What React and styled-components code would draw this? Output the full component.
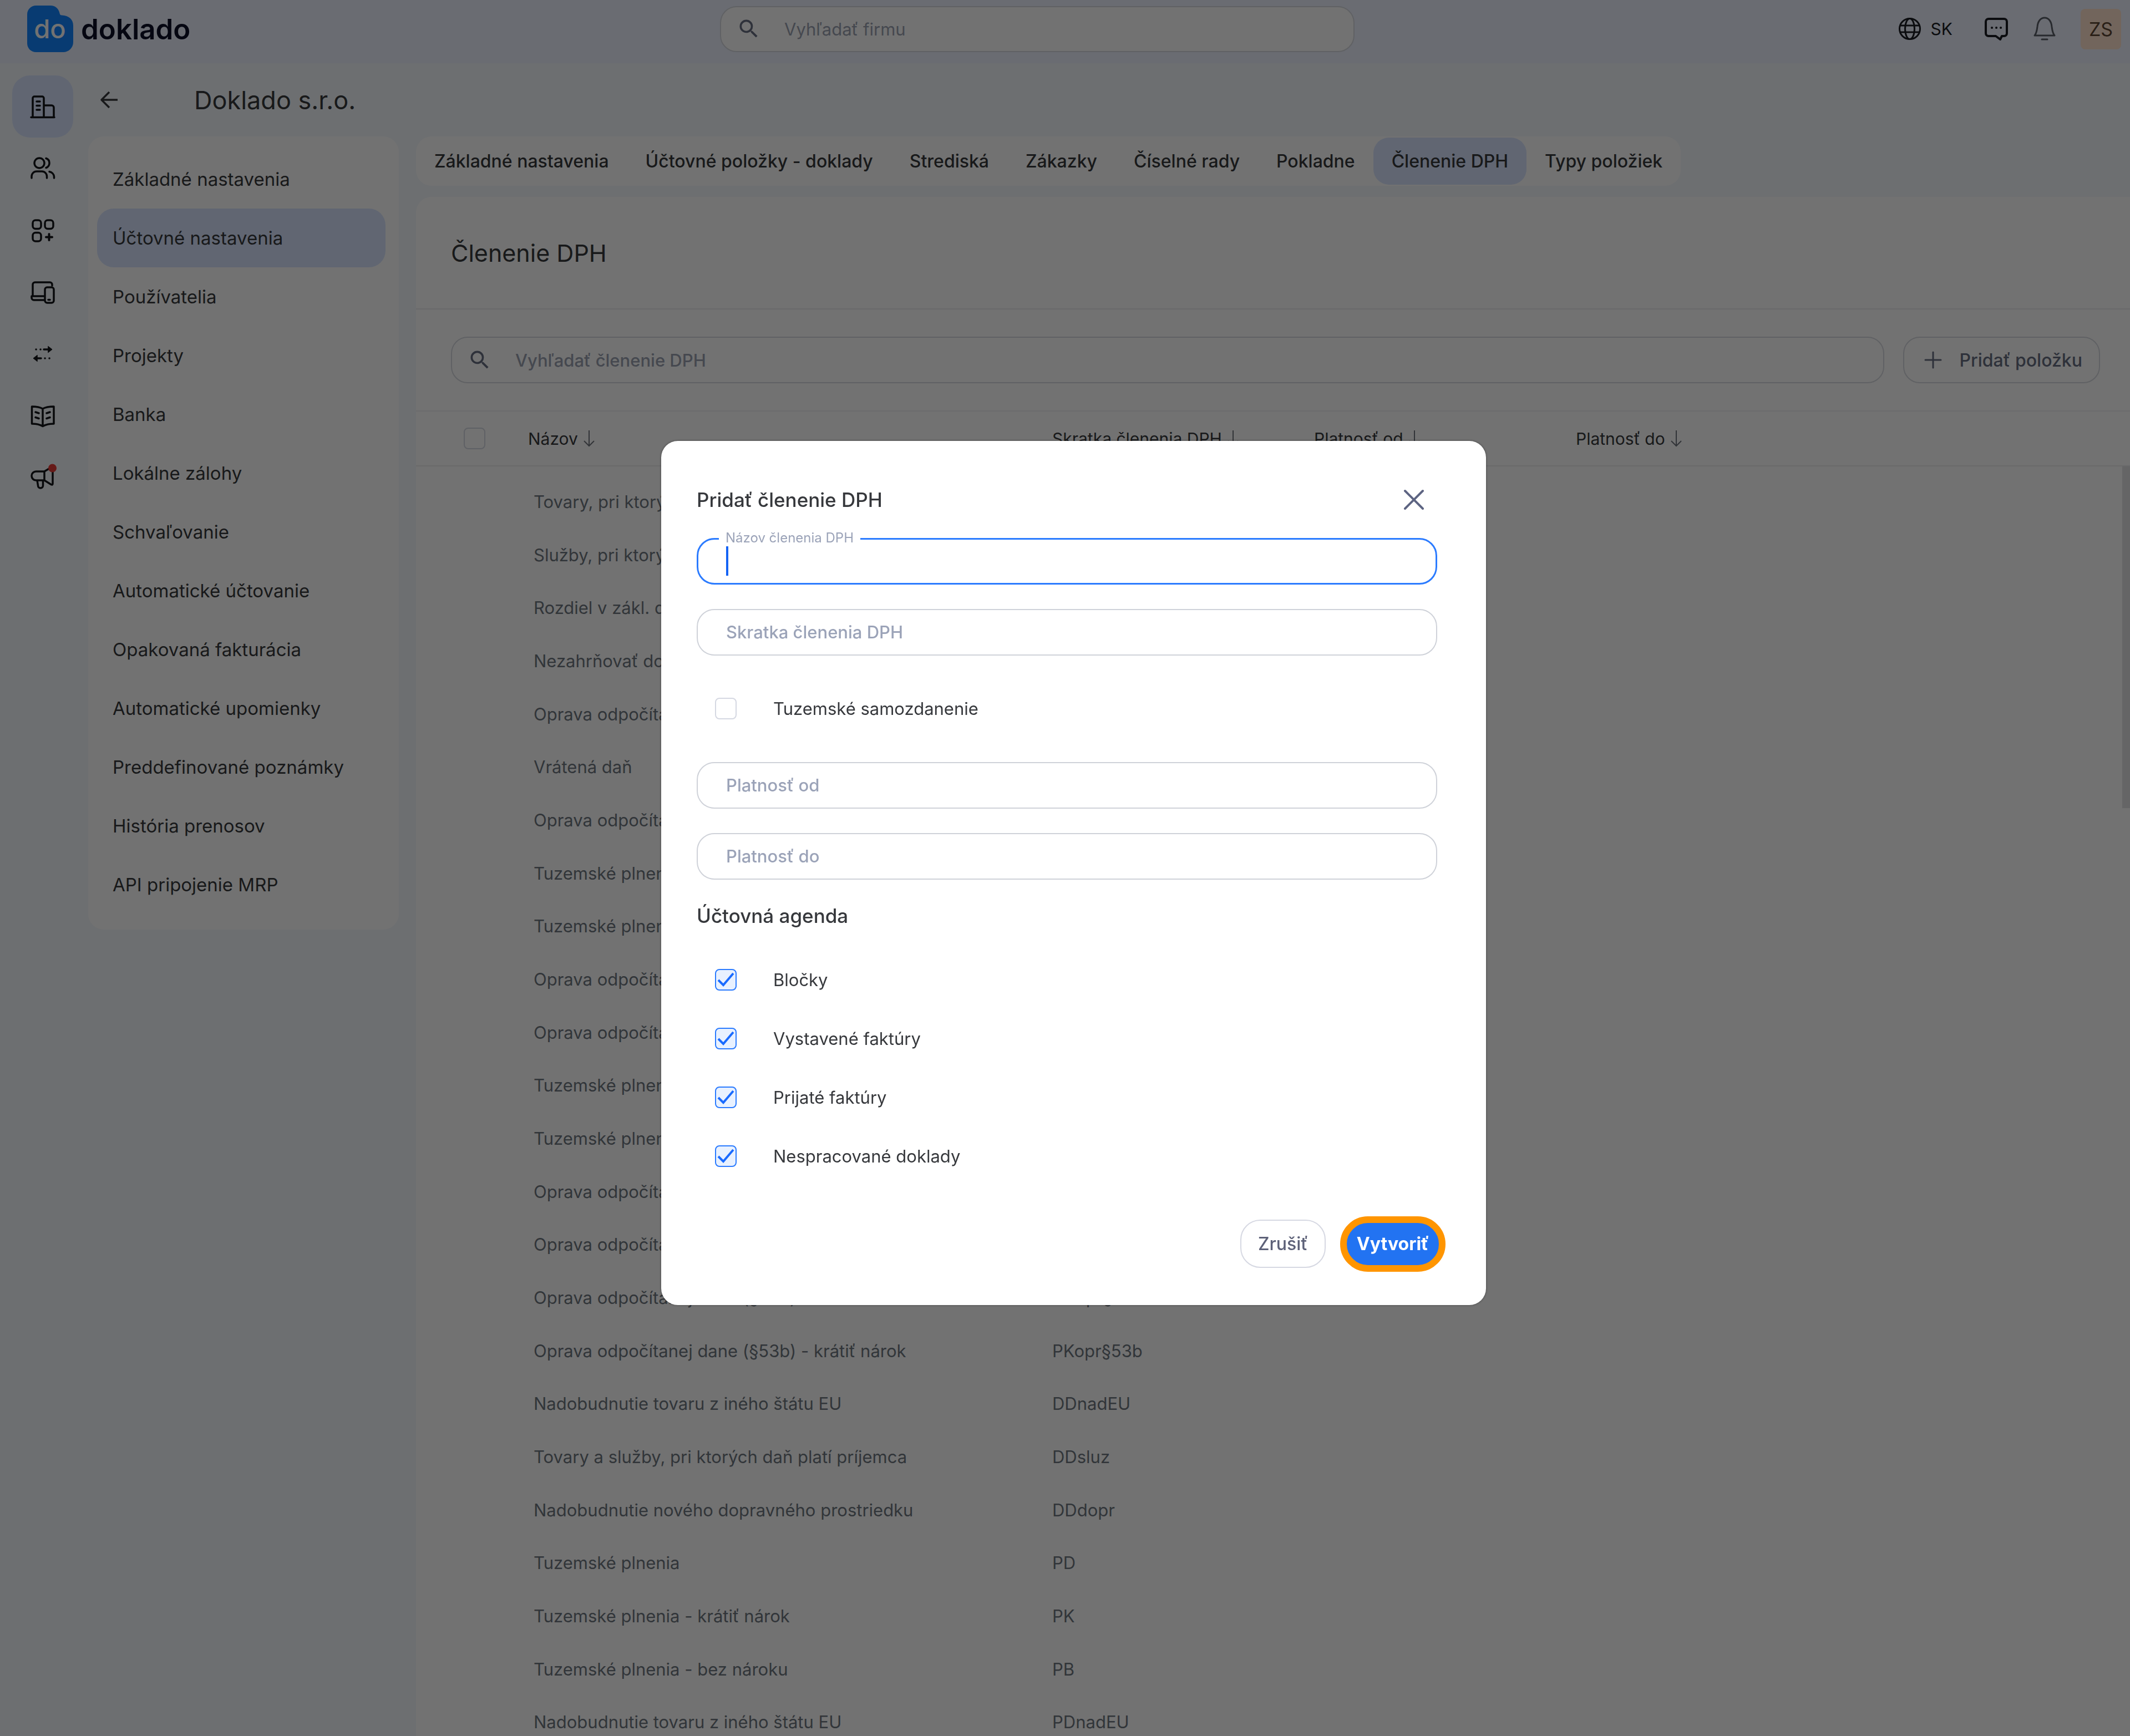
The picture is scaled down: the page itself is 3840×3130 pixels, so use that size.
import { useState } from 'react'
import styled, { createGlobalStyle } from 'styled-components'
import { MdSearch } from 'react-icons/md'

const GlobalStyle = createGlobalStyle`
    * {
        box-sizing: border-box;
    }

    body {
        margin: 0;
        background: #f4f8fc;
        font-family: Inter, "Liberation Sans", sans-serif;
        font-size: 31px;
        color: #36383c;
    }

    button, input {
        font: inherit;
        color: inherit;
    }

    button {
        cursor: pointer;
    }

    a {
        color: inherit;
        text-decoration: none;
    }
`

const Page = styled.div`
    display: flex;
    flex-direction: column;
    height: 100vh;
    overflow: hidden;
`

const Header = styled.header`
    display: grid;
    grid-template-columns: 1249fr 1144fr 1382fr;
    align-items: center;
    flex: none;
    height: 114px;
    padding: 0 16px 10px 49px;
    background: #ecf2ff;
`

const Logo = styled.a`
    display: flex;
    align-items: center;
    gap: 14px;
    font-size: 51px;
    font-weight: 600;
    color: #0c0f28;
`

const LogoTile = styled.svg`
    width: 83px;
    height: 84px;
`

const SearchBox = styled.label`
    display: flex;
    align-items: center;
    gap: 40px;
    flex: 1;
    height: ${({ $height }) => $height}px;
    padding: 0 28px;
    border: 2px solid #d6d9df;
    border-radius: 30px;
    background: white;
    color: #676e82;

    svg {
        flex: none;
        width: 44px;
        height: 44px;
    }

    input {
        flex: 1;
        min-width: 0;
        border: none;
        outline: none;
        background: none;
        font-size: 31px;
        font-weight: ${({ $weight }) => $weight || 400};
    }

    input::placeholder {
        color: #9ba2b2;
        opacity: 1;
    }
`

const HeaderActions = styled.div`
    display: flex;
    align-items: center;
    justify-content: flex-end;
`

const HeaderButton = styled.button`
    display: flex;
    align-items: center;
    gap: 16px;
    margin-right: ${({ $gap }) => $gap}px;
    padding: 0;
    border: none;
    background: none;
    color: ${({ $color }) => $color || '#1a1c22'};
    font-size: 30px;

    svg {
        width: 44px;
        height: 44px;
    }
`

const Avatar = styled.button`
    width: 73px;
    height: 73px;
    padding: 0;
    border: none;
    border-radius: 8px;
    background: #ffe3cf;
    color: #5c4634;
    font-size: 34px;
`

const Body = styled.div`
    display: flex;
    flex: 1;
    min-height: 0;
`

const Rail = styled.nav`
    display: flex;
    flex-direction: column;
    flex: none;
    width: 159px;
    padding: 22px 0 0 22px;
`

const RailLink = styled.a`
    display: flex;
    align-items: center;
    justify-content: center;
    width: 110px;
    height: 112px;
    border-radius: 32px;
    background: ${({ $active }) => ($active ? '#d8e5ff' : 'none')};
    color: #14161a;

    svg {
        width: 48px;
        height: 48px;
        overflow: visible;
    }
`

const Content = styled.div`
    display: flex;
    flex-direction: column;
    flex: 1;
    min-width: 0;
`

const TitleBar = styled.div`
    display: flex;
    align-items: center;
    gap: 134px;
    flex: none;
    height: 132px;
    padding-left: 19px;

    button {
        display: flex;
        padding: 0;
        border: none;
        background: none;
    }

    svg {
        width: 38px;
        height: 38px;
    }

    h1 {
        margin: 0;
        font-size: 45px;
        font-weight: 400;
    }
`

const Columns = styled.div`
    display: flex;
    align-items: flex-start;
    gap: 31px;
    flex: 1;
    min-height: 0;
`

const SideMenu = styled.nav`
    display: flex;
    flex-direction: column;
    flex: none;
    width: 560px;
    padding: 24px 24px 28px 16px;
    border-radius: 28px;
    background: white;
`

const SideLink = styled.a`
    display: flex;
    align-items: center;
    height: 106px;
    padding: 0 28px;
    border-radius: 30px;
    font-size: 33px;
    background: ${({ $active }) => ($active ? '#d8e5ff' : 'none')};
`

const Main = styled.main`
    display: flex;
    flex-direction: column;
    gap: 20px;
    flex: 1;
    min-width: 0;
    height: 100%;
`

const Tabs = styled.nav`
    display: flex;
    align-self: flex-start;
    flex: none;
    padding: 2px 0;
    border-radius: 28px;
    background: white;
`

const Tab = styled.a`
    display: flex;
    align-items: center;
    height: 85px;
    padding: 0 33px;
    border-radius: 28px;
    font-size: 32px;
    font-weight: 500;
    background: ${({ $active }) => ($active ? '#d8e5ff' : 'none')};
`

const Panel = styled.section`
    display: flex;
    flex-direction: column;
    flex: 1;
    min-height: 0;
    border-radius: 28px 0 0 0;
    background: white;
`

const PanelTitle = styled.h2`
    display: flex;
    align-items: center;
    flex: none;
    height: 203px;
    margin: 0;
    padding: 0 63px;
    border-bottom: 2px solid #ebebee;
    font-size: 43px;
    font-weight: 400;
`

const Toolbar = styled.div`
    display: flex;
    align-items: center;
    gap: 34px;
    flex: none;
    height: 184px;
    padding: 0 54px 0 63px;
    border-bottom: 2px solid #f2f2f4;
`

const AddButton = styled.button`
    display: flex;
    align-items: center;
    justify-content: space-between;
    flex: none;
    width: 355px;
    height: 84px;
    padding: 0 30px 0 36px;
    border: 2px solid #d6d9df;
    border-radius: 30px;
    background: white;
    color: #676e82;
    font-size: 32px;
    font-weight: 500;

    svg {
        width: 32px;
        height: 32px;
    }
`

const TableArea = styled.div`
    position: relative;
    flex: 1;
    min-height: 0;
    overflow: hidden;
`

const Scrollbar = styled.div`
    position: absolute;
    top: 99px;
    right: 0;
    width: 14px;
    height: 616px;
    background: #e2e2e4;
`

const Table = styled.table`
    width: 100%;
    table-layout: fixed;
    border-collapse: collapse;
    text-align: left;

    th, td {
        padding: 0;
        white-space: nowrap;
    }

    th {
        height: 98px;
        border-bottom: 2px solid #ebebee;
        font-size: 30px;
        font-weight: 400;
    }

    tbody::before {
        content: '';
        display: block;
        height: 15px;
    }

    td {
        height: 96px;
        font-size: 31px;
        color: #6f7781;
    }

    tr:nth-child(3n) td {
        height: 95px;
    }

    td:nth-child(2) {
        padding-left: 10px;
    }

    .pick {
        width: 202px;
        padding-left: 86px;
    }

    .name {
        width: 945px;
    }

    .short {
        width: 472px;
    }

    th svg {
        width: 20px;
        height: 30px;
        margin-left: 10px;
        vertical-align: -4px;
        color: #70757e;
    }
`

const Checkbox = styled.input.attrs({ type: 'checkbox' })`
    appearance: none;
    display: block;
    flex: none;
    width: 39px;
    height: 39px;
    margin: 0;
    border: 2px solid #d5d8e2;
    border-radius: 8px;
    background: white;

    &:checked {
        border-color: #2b7bff;
        background: #e8f1ff url("data:image/svg+xml,%3Csvg xmlns='http://www.w3.org/2000/svg' viewBox='0 0 35 35'%3E%3Cpath d='M4 18l9 9L31 6' fill='none' stroke='%231a6bff' stroke-width='4'/%3E%3C/svg%3E") center / 35px no-repeat;
    }
`

const Overlay = styled.div`
    position: fixed;
    inset: 0;
    display: flex;
    align-items: center;
    justify-content: center;
    padding: 17px 0 0 31px;
    background: rgba(0, 0, 0, 0.553);
`

const Modal = styled.form`
    display: flex;
    flex-direction: column;
    width: 1487px;
    padding: 58px 88px 60px 64px;
    border-radius: 30px;
    background: white;
    box-shadow: 0 0 4px rgba(0, 0, 0, 0.4);
`

const ModalHeader = styled.div`
    display: flex;
    align-items: center;
    justify-content: space-between;
    height: 96px;
    margin-bottom: 21px;
    padding-right: 22px;

    h2 {
        margin: 0;
        font-size: 35px;
        font-weight: 500;
    }

    button {
        display: flex;
        padding: 0;
        border: none;
        background: none;
        color: #5d6482;
    }

    svg {
        width: 40px;
        height: 40px;
    }
`

const FieldGroup = styled.div`
    display: flex;
    flex-direction: column;
    gap: 44px;
`

const Field = styled.div`
    position: relative;
    display: flex;

    input {
        width: 100%;
        height: 84px;
        padding: 0 51px;
        border: 2px solid #cfd2d9;
        border-radius: 32px;
        outline: none;
        background: white;
        font-size: 31px;
        font-weight: 500;
    }

    input::placeholder {
        color: #9ba3b8;
        opacity: 1;
    }

    input:focus {
        border: 3px solid #2b7bff;
        caret-color: transparent;
    }
`

const FloatingLabel = styled.label`
    position: absolute;
    top: -14px;
    left: 40px;
    padding: 0 12px;
    background: white;
    font-size: 24px;
    line-height: 28px;
    color: #9ba3b8;
`

const Caret = styled.span`
    position: absolute;
    top: 15px;
    left: 53px;
    width: 4px;
    height: 53px;
    background: #1463f5;
`

const CheckRow = styled.label`
    display: flex;
    align-items: center;
    gap: 66px;
    height: 106px;
    margin: ${({ $spaced }) => ($spaced ? '43px 0' : '0')};
    padding-left: 33px;
    font-size: 31px;
    color: #36383c;
`

const SectionTitle = styled.h3`
    margin: 41px 0 39px;
    font-size: 35px;
    font-weight: 500;
    line-height: 48px;
`

const Actions = styled.div`
    display: flex;
    align-items: center;
    justify-content: flex-end;
    gap: 26px;
    height: 100px;
    margin: 55px -15px 0 0;
`

const CancelButton = styled.button`
    width: 154px;
    height: 87px;
    padding: 0;
    border: 2px solid #d6d8e2;
    border-radius: 36px;
    background: white;
    color: #5d6178;
    font-size: 32px;
    font-weight: 500;
`

const SubmitButton = styled.button`
    width: 190px;
    height: 100px;
    padding: 0;
    border: 12px solid #ff9500;
    border-radius: 50px;
    background: #2273f2;
    color: white;
    font-size: 32px;
    font-weight: 700;
`

const LineIcon = ({ size = 48, width = 3, children }) => (
    <svg viewBox={`0 0 ${size} ${size}`} fill="none" stroke="currentColor" strokeWidth={width} strokeLinecap="round" strokeLinejoin="round" aria-hidden="true">
        {children}
    </svg>
)

const SortArrow = () => (
    <svg viewBox="0 0 20 30" fill="none" stroke="currentColor" strokeWidth="2" aria-hidden="true">
        <path d="M10 0v28M1 19l9 9 9-9" />
    </svg>
)

const railItems = [
    {
        label: 'Firma',
        icon: <path d="M3 43.5h42M6 43V9a3 3 0 0 1 3-3h14a3 3 0 0 1 3 3v34M26 22h14a4 4 0 0 1 4 4v17M13 15h6M13 22.5h6M13 30h6" />,
    },
    {
        label: 'Kontakty',
        icon: (
            <>
                <circle cx="18" cy="14" r="9" />
                <path d="M30 5.5a9 9 0 0 1 0 17M4 41v-3a9 9 0 0 1 9-9h9.5a9 9 0 0 1 9 9v3M36 29.5a11 10 0 0 1 8.5 9V41" />
            </>
        ),
    },
    {
        label: 'Aplikácie',
        icon: (
            <>
                <rect x="6" y="5" width="15" height="15.5" rx="5" />
                <rect x="28" y="5" width="15" height="15.5" rx="5" />
                <rect x="6" y="27.5" width="15" height="15.5" rx="5" />
                <path d="M35.5 30v11M30 35.5h11" strokeWidth="4" />
            </>
        ),
    },
    {
        label: 'Zariadenia',
        icon: (
            <>
                <path d="M6 29V9a4 4 0 0 1 4-4h27a4 4 0 0 1 4 4v2M27 30H4v3a4 4 0 0 0 4 4h19" />
                <rect x="28" y="14" width="16" height="28" rx="4" />
                <path d="M34 36.5h3" />
            </>
        ),
    },
    {
        label: 'Prevody',
        icon: (
            <>
                <path d="M26 14h9M12 14h.1M20 14h.1M13 30h8M28 30h.1M36 30h.1" />
                <path d="M34 8.5l7 5.5-7 5.5zM14 24.5L7 30l7 5.5z" fill="currentColor" strokeWidth="1" />
            </>
        ),
    },
    {
        label: 'Návody',
        icon: <path d="M24 9C18 5.5 12 5 4.5 5v31c7 0 14 1 19.5 4.5 6-3.5 12-4.5 20-4.5V5c-8 0-14 .5-20 4zM24 9v31M11 15l6 2M11 24.5l6 2M37 15l-6 2M37 24.5l-6 2" />,
    },
    {
        label: 'Novinky',
        icon: (
            <>
                <path d="M27 10H12a8 8 0 0 0 0 16h15zM27 10l15-9v31q0 3-3 1.5L27 26M14 26l1.5 9.5a4.5 4.5 0 0 0 9 0V26" />
                <circle cx="41.5" cy="4" r="7.5" fill="#e43a36" stroke="none" />
            </>
        ),
    },
]

const menuItems = [
    'Základné nastavenia',
    'Účtovné nastavenia',
    'Používatelia',
    'Projekty',
    'Banka',
    'Lokálne zálohy',
    'Schvaľovanie',
    'Automatické účtovanie',
    'Opakovaná fakturácia',
    'Automatické upomienky',
    'Preddefinované poznámky',
    'História prenosov',
    'API pripojenie MRP',
]

const tabs = [
    'Základné nastavenia',
    'Účtovné položky - doklady',
    'Strediská',
    'Zákazky',
    'Číselné rady',
    'Pokladne',
    'Členenie DPH',
    'Typy položiek',
]

const rows = [
    ['Tovary, pri ktorých', 'DDtov'],
    ['Služby, pri ktorých platí daň príjemca', 'DDsl'],
    ['Rozdiel v zákl. dane', 'DDroz'],
    ['Nezahrňovať do DPH', 'X'],
    ['Oprava odpočítanej dane', 'DDopr'],
    ['Vrátená daň', 'DDvrat'],
    ['Oprava odpočítanej dane', 'PDopr'],
    ['Tuzemské plnenia', 'DD'],
    ['Tuzemské plnenia', 'DK'],
    ['Oprava odpočítanej dane', 'PKopr'],
    ['Oprava odpočítanej dane', 'PBopr'],
    ['Tuzemské plnenia', 'DB'],
    ['Tuzemské plnenia', 'DT'],
    ['Oprava odpočítanej dane', 'DDo53'],
    ['Oprava odpočítanej dane', 'DKo53'],
    ['Oprava odpočítanej dane (§53b)', 'PDopr§53b'],
    ['Oprava odpočítanej dane (§53b) - krátiť nárok', 'PKopr§53b'],
    ['Nadobudnutie tovaru z iného štátu EU', 'DDnadEU'],
    ['Tovary a služby, pri ktorých daň platí príjemca', 'DDsluz'],
    ['Nadobudnutie nového dopravného prostriedku', 'DDdopr'],
    ['Tuzemské plnenia', 'PD'],
    ['Tuzemské plnenia - krátiť nárok', 'PK'],
    ['Tuzemské plnenia - bez nároku', 'PB'],
    ['Nadobudnutie tovaru z iného štátu EU', 'PDnadEU'],
]

const agendas = ['Bločky', 'Vystavené faktúry', 'Prijaté faktúry', 'Nespracované doklady']

function TopBar() {
    return (
        <Header>
            <Logo href="#">
                <LogoTile viewBox="0 0 83 84" aria-hidden="true">
                    <path d="M16 0h26c9 0 15 6 16.5 14 .5 2.5 1.5 3.5 4 3.5C75 18 83 25 83 36v30c0 10-8 18-18 18H16C7 84 0 77 0 68V16C0 7 7 0 16 0z" fill="#1285ff" />
                    <text x="41" y="59" textAnchor="middle" fontSize="47" fontWeight="500" fill="white">do</text>
                </LogoTile>
                doklado
            </Logo>
            <SearchBox $height={83}>
                <MdSearch />
                <input type="search" aria-label="Vyhľadať firmu" placeholder="Vyhľadať firmu" />
            </SearchBox>
            <HeaderActions>
                <HeaderButton $gap={57}>
                    <LineIcon size={44}>
                        <circle cx="22" cy="22" r="18.5" />
                        <ellipse cx="22" cy="22" rx="8.5" ry="18.5" />
                        <path d="M5 16h34M5 28h34" />
                    </LineIcon>
                    SK
                </HeaderButton>
                <HeaderButton $gap={43} aria-label="Správy">
                    <LineIcon size={44} width={4}>
                        <path d="M8 4h28a5 5 0 0 1 5 5V30a5 5 0 0 1-5 5h-4l-3 6-8-6H8a5 5 0 0 1-5-5V9a5 5 0 0 1 5-5z" />
                        <path d="M14 20h.1M22 20h.1M30 20h.1" />
                    </LineIcon>
                </HeaderButton>
                <HeaderButton $gap={43} $color="#5a5e68" aria-label="Upozornenia">
                    <LineIcon size={44}>
                        <path d="M4 34c4-5 4-9 5-16C10 8 15 2 22 2s12 6 13 16c1 7 1 11 5 16zM17 41h10" />
                    </LineIcon>
                </HeaderButton>
                <Avatar>ZS</Avatar>
            </HeaderActions>
        </Header>
    )
}

function VatTable() {
    return (
        <TableArea>
            <Table>
                <thead>
                    <tr>
                        <th className="pick"><Checkbox aria-label="Vybrať všetko" /></th>
                        <th className="name">Názov<SortArrow /></th>
                        <th className="short">Skratka členenia DPH<SortArrow /></th>
                        <th className="short">Platnosť od<SortArrow /></th>
                        <th>Platnosť do<SortArrow /></th>
                    </tr>
                </thead>
                <tbody>
                    {rows.map(([name, code]) => (
                        <tr key={code}>
                            <td />
                            <td>{name}</td>
                            <td>{code}</td>
                            <td />
                            <td />
                        </tr>
                    ))}
                </tbody>
            </Table>
            <Scrollbar />
        </TableArea>
    )
}

function AddVatModal() {
    const [checked, setChecked] = useState(agendas)

    const toggle = (agenda) => {
        setChecked(checked.includes(agenda) ? checked.filter((a) => a !== agenda) : [...checked, agenda])
    }

    return (
        <Overlay>
            <Modal role="dialog" aria-labelledby="modal-title" onSubmit={(e) => e.preventDefault()}>
                <ModalHeader>
                    <h2 id="modal-title">Pridať členenie DPH</h2>
                    <button type="button" aria-label="Zavrieť">
                        <LineIcon size={40} width={4}>
                            <path d="M4 4l32 32M36 4L4 36" />
                        </LineIcon>
                    </button>
                </ModalHeader>
                <FieldGroup>
                    <Field>
                        <input id="vat-name" type="text" autoFocus />
                        <FloatingLabel htmlFor="vat-name">Názov členenia DPH</FloatingLabel>
                        <Caret />
                    </Field>
                    <Field>
                        <input type="text" aria-label="Skratka členenia DPH" placeholder="Skratka členenia DPH" />
                    </Field>
                </FieldGroup>
                <CheckRow $spaced>
                    <Checkbox />
                    Tuzemské samozdanenie
                </CheckRow>
                <FieldGroup>
                    <Field>
                        <input type="text" aria-label="Platnosť od" placeholder="Platnosť od" />
                    </Field>
                    <Field>
                        <input type="text" aria-label="Platnosť do" placeholder="Platnosť do" />
                    </Field>
                </FieldGroup>
                <SectionTitle>Účtovná agenda</SectionTitle>
                {agendas.map((agenda) => (
                    <CheckRow key={agenda}>
                        <Checkbox checked={checked.includes(agenda)} onChange={() => toggle(agenda)} />
                        {agenda}
                    </CheckRow>
                ))}
                <Actions>
                    <CancelButton type="button">Zrušiť</CancelButton>
                    <SubmitButton type="submit">Vytvoriť</SubmitButton>
                </Actions>
            </Modal>
        </Overlay>
    )
}

export default function App() {
    return (
        <>
            <GlobalStyle />
            <Page>
                <TopBar />
                <Body>
                    <Rail>
                        {railItems.map((item, i) => (
                            <RailLink key={item.label} href="#" aria-label={item.label} $active={i === 0}>
                                <LineIcon width={3.5}>{item.icon}</LineIcon>
                            </RailLink>
                        ))}
                    </Rail>
                    <Content>
                        <TitleBar>
                            <button aria-label="Späť">
                                <LineIcon size={38} width={3.5}>
                                    <path d="M34 19H5M19 5L5 19l14 14" strokeLinecap="butt" />
                                </LineIcon>
                            </button>
                            <h1>Doklado s.r.o.</h1>
                        </TitleBar>
                        <Columns>
                            <SideMenu>
                                {menuItems.map((item) => (
                                    <SideLink key={item} href="#" $active={item === 'Účtovné nastavenia'}>{item}</SideLink>
                                ))}
                            </SideMenu>
                            <Main>
                                <Tabs>
                                    {tabs.map((tab) => (
                                        <Tab key={tab} href="#" $active={tab === 'Členenie DPH'}>{tab}</Tab>
                                    ))}
                                </Tabs>
                                <Panel>
                                    <PanelTitle>Členenie DPH</PanelTitle>
                                    <Toolbar>
                                        <SearchBox $height={84} $weight={500}>
                                            <MdSearch />
                                            <input type="search" aria-label="Vyhľadať členenie DPH" placeholder="Vyhľadať členenie DPH" />
                                        </SearchBox>
                                        <AddButton>
                                            <LineIcon size={32}>
                                                <path d="M16 2v28M2 16h28" />
                                            </LineIcon>
                                            Pridať položku
                                        </AddButton>
                                    </Toolbar>
                                    <VatTable />
                                </Panel>
                            </Main>
                        </Columns>
                    </Content>
                </Body>
            </Page>
            <AddVatModal />
        </>
    )
}
